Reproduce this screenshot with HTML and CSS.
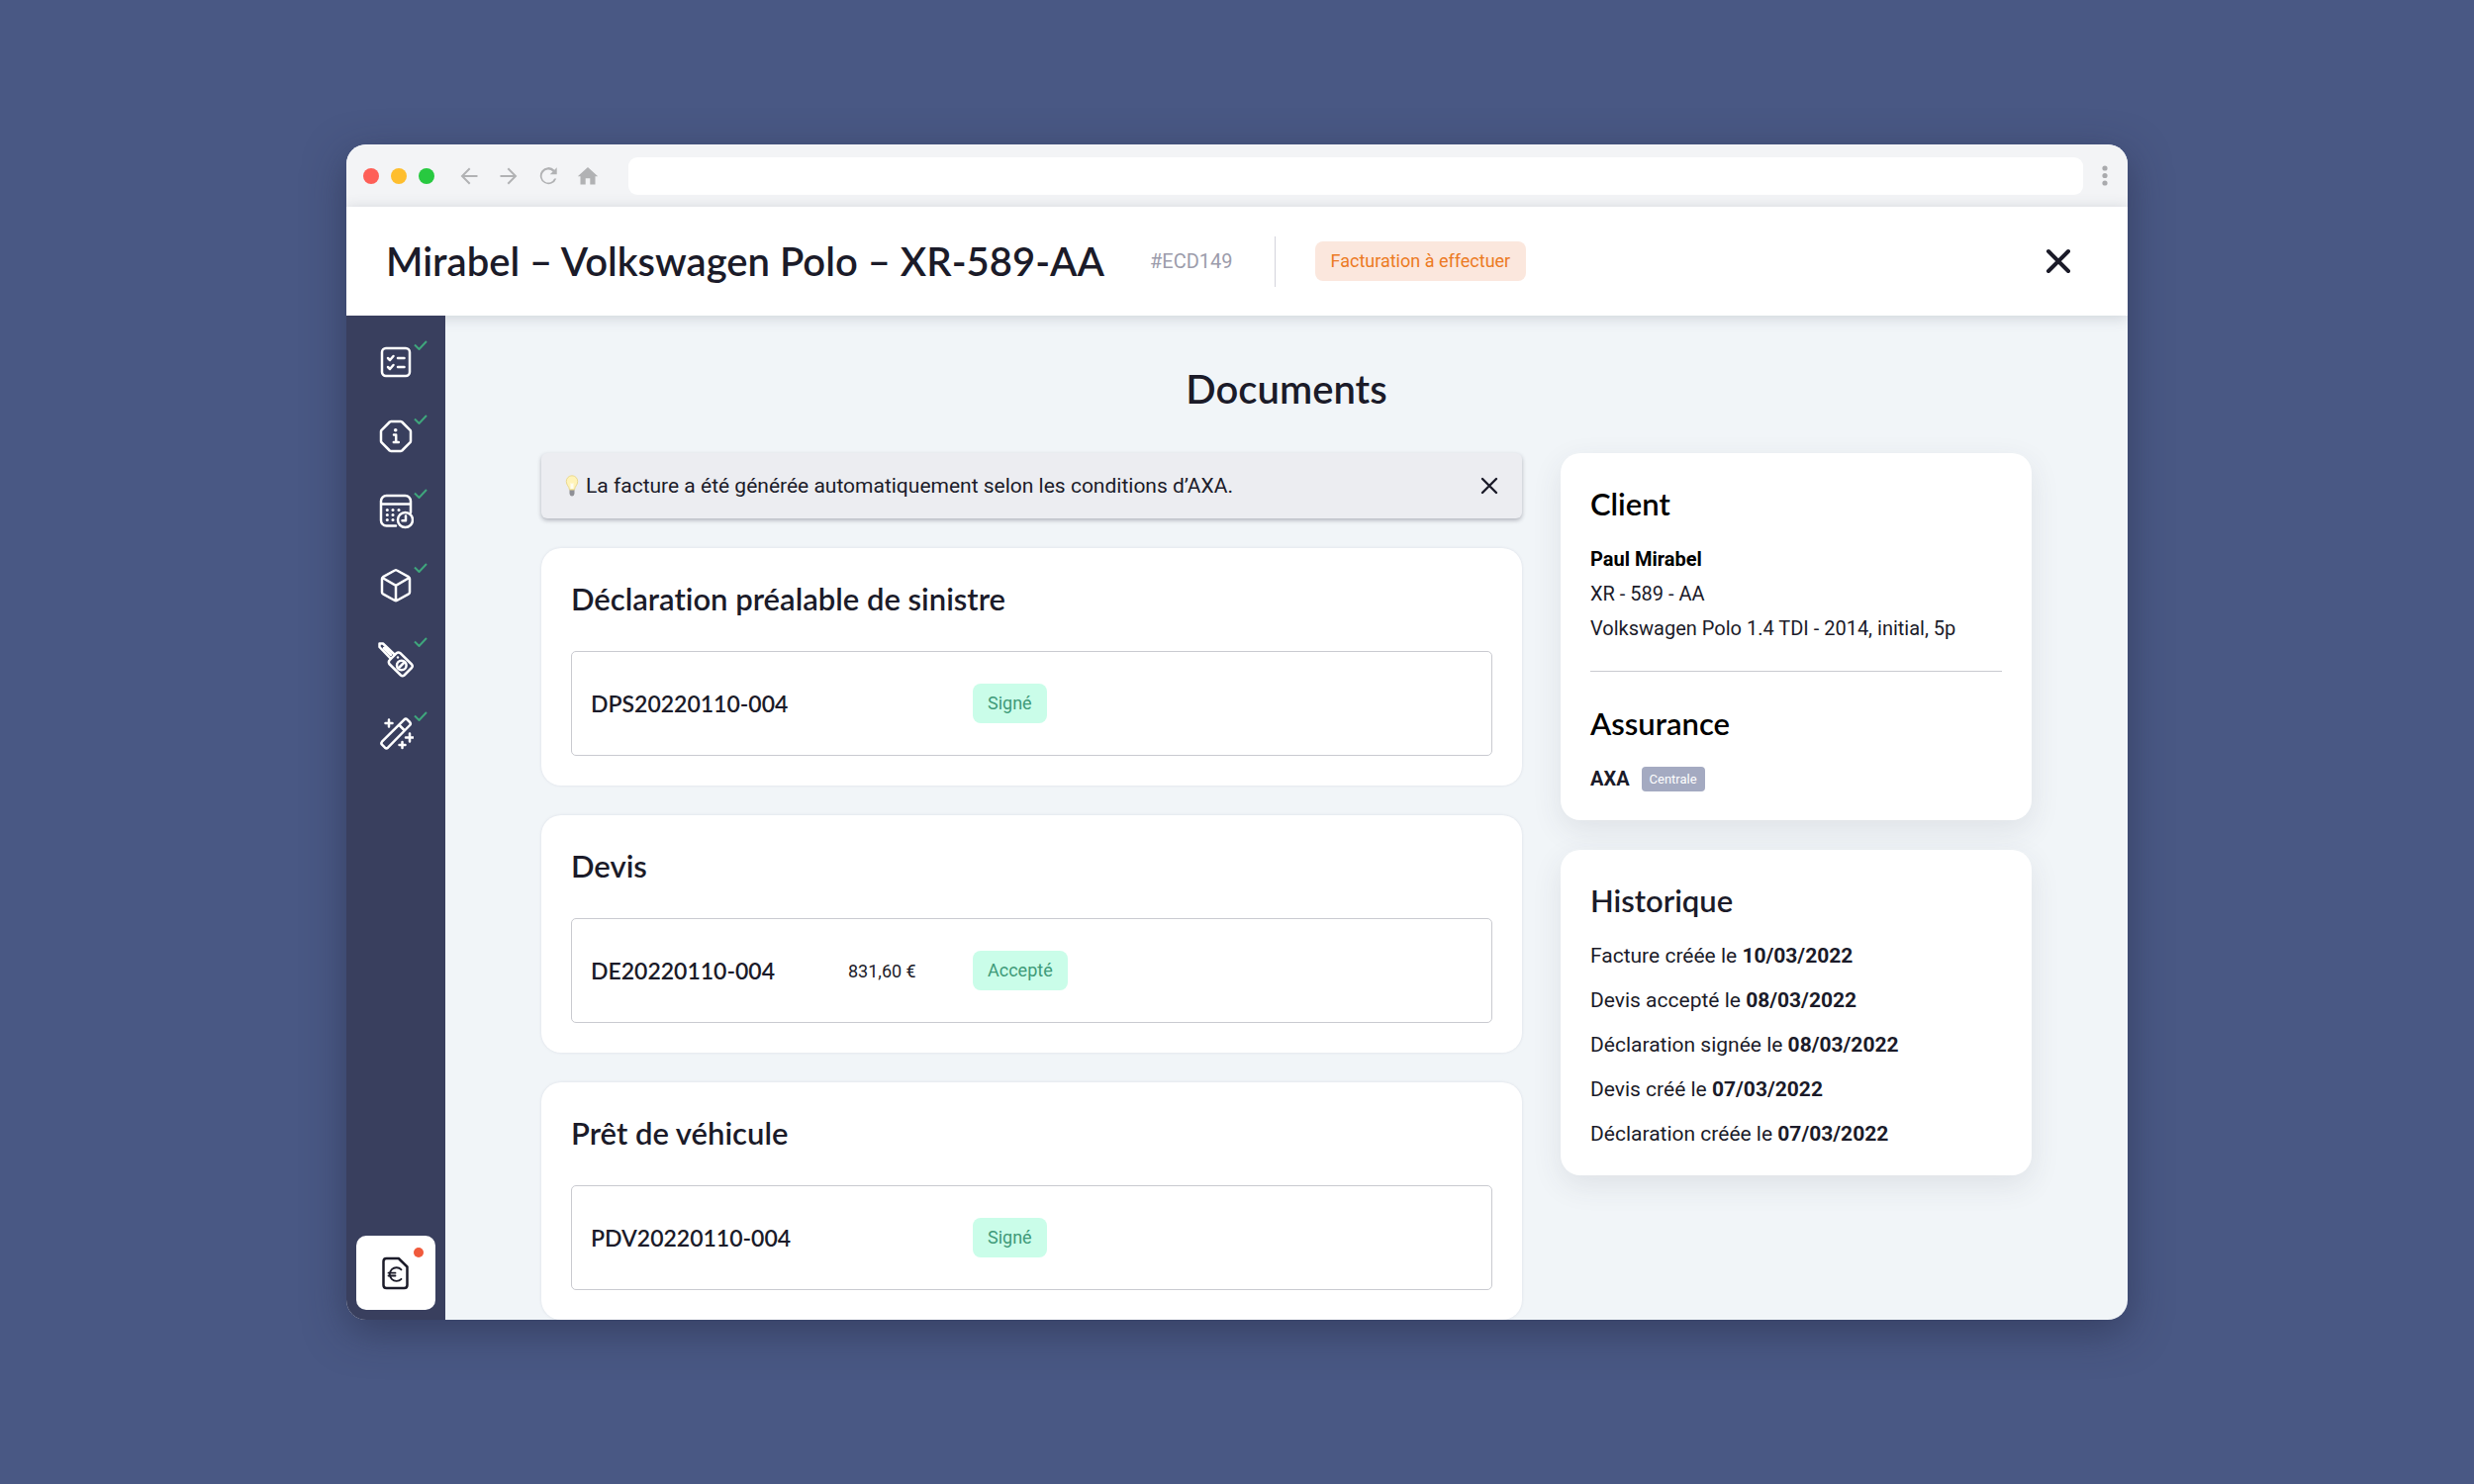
FILE: index.html
```html
<!DOCTYPE html>
<html lang="fr">
<head>
<meta charset="utf-8">
<meta name="viewport" content="width=device-width, initial-scale=1">
<title>Mirabel – Documents</title>
<link rel="stylesheet" href="styles.css">
</head>
<body>
<div class="window">
  <div class="chrome">
    <div class="lights"><span class="light red"></span><span class="light yellow"></span><span class="light green"></span></div>
    <div class="nav-buttons">
      <button class="icon-button" type="button" aria-label="Page précédente"><svg width="24" height="24" viewBox="0 0 24 24" fill="#b1b2b4"><path d="M20.5 11v2H7.400l6 6L12 20.400 3.600 12 12 3.600 13.400 5l-6 6z"/></svg></button>
      <button class="icon-button" type="button" aria-label="Page suivante"><svg width="24" height="24" viewBox="0 0 24 24" fill="#b1b2b4"><path d="M3.500 11v2h13.100l-6 6 1.400 1.400L20.400 12 12 3.600 10.600 5l6 6z"/></svg></button>
      <button class="icon-button" type="button" aria-label="Actualiser"><svg width="24" height="24" viewBox="0 0 24 24" fill="#b1b2b4"><path d="M18.350 5.650A8.500 8.500 0 1 0 20.300 14.500h-2.200A6.500 6.500 0 1 1 16.600 7.400L13.700 10.300H20.700V3.300z"/></svg></button>
      <button class="icon-button" type="button" aria-label="Accueil"><svg width="24" height="24" viewBox="0 0 24 24" fill="#b1b2b4"><path d="M9.700 20.500v-6.200h4.600v6.200h5.200V12.200h2.700L12 3 1.800 12.200h2.700v8.300z"/></svg></button>
    </div>
    <input class="address" type="text" aria-label="Adresse">
    <button class="icon-button menu" type="button" aria-label="Menu"><svg width="6" height="22" viewBox="0 0 6 22" fill="#a9aaad"><circle cx="3" cy="3" r="2.600"/><circle cx="3" cy="10.500" r="2.600"/><circle cx="3" cy="18" r="2.600"/></svg></button>
  </div>

  <header class="header">
    <h1 class="title">Mirabel – Volkswagen Polo – XR-589-AA</h1>
    <span class="reference">#ECD149</span>
    <span class="divider"></span>
    <span class="badge orange">Facturation à effectuer</span>
    <button class="icon-button close" type="button" aria-label="Fermer"><svg width="26" height="26" viewBox="0 0 26 26" fill="none" stroke="#1b1b29" stroke-width="4" stroke-linecap="round"><path d="M3 3l20 20M23 3L3 23"/></svg></button>
  </header>

  <div class="body">
    <nav class="sidebar" aria-label="Étapes">
      <a class="step" href="#taches" aria-label="Tâches">
        <svg class="icon" width="36" height="36" viewBox="0 0 36 36"><rect x="4" y="3" width="28" height="28" rx="4"/><path d="M10 13l2 2 3.500-4M10 22l2 2 3.500-4"/><path d="M20 13h6.500M20 22h6.500"/></svg>
        <svg class="check" width="14" height="10" viewBox="0 0 14 10"><path d="M1 4.500L5.500 9 13 1"/></svg>
      </a>
      <a class="step" href="#infos" aria-label="Informations">
        <svg class="icon" width="36" height="36" viewBox="0 0 36 36"><path d="M11.800 2.500Q12.500 2 13.200 2h9.600q.7 0 1.400.5l8.300 8.300q.5.600.5 1.400v9.600q0 .8-.5 1.400l-8.300 8.300q-.7.500-1.400.5h-9.600q-.7 0-1.400-.5L3.500 23.200Q3 22.600 3 21.800v-9.600q0-.8.500-1.400z"/><path d="M16 15.500h2.200v7M15.800 23h5"/><circle cx="17.700" cy="10.800" r="1.800" fill="#fff" stroke="none"/></svg>
        <svg class="check" width="14" height="10" viewBox="0 0 14 10"><path d="M1 4.500L5.500 9 13 1"/></svg>
      </a>
      <a class="step" href="#planning" aria-label="Planning">
        <svg class="icon" width="36" height="36" viewBox="0 0 36 36"><path d="M18 32.500H8.500a5.500 5.500 0 0 1-5.500-5.500V7.500A5.500 5.500 0 0 1 8.500 2h19A5.500 5.500 0 0 1 33 7.500V19M3 10.500h30"/><circle cx="27.500" cy="26.500" r="7.500"/><path d="M28 22.500v4.700h-3.500"/><g fill="#fff" stroke="none"><circle cx="9.300" cy="16.500" r="1.500"/><circle cx="15" cy="16.500" r="1.500"/><circle cx="21" cy="16.500" r="1.500"/><circle cx="9.300" cy="21.500" r="1.500"/><circle cx="15" cy="21.500" r="1.500"/><circle cx="9.300" cy="26.500" r="1.500"/><circle cx="15" cy="26.500" r="1.500"/></g></svg>
        <svg class="check" width="14" height="10" viewBox="0 0 14 10"><path d="M1 4.500L5.500 9 13 1"/></svg>
      </a>
      <a class="step" href="#pieces" aria-label="Pièces">
        <svg class="icon" width="36" height="36" viewBox="0 0 36 36"><path d="M17 2.500q1-.6 2 0l12 6.700q1 .6 1 1.800v13.500q0 1.200-1 1.800l-12 6.700q-1 .6-2 0l-12-6.700q-1-.6-1-1.800V11q0-1.200 1-1.800zM4.500 10L18 17.800 31.500 10M18 17.800V33"/></svg>
        <svg class="check" width="14" height="10" viewBox="0 0 14 10"><path d="M1 4.500L5.500 9 13 1"/></svg>
      </a>
      <a class="step" href="#vehicule" aria-label="Véhicule">
        <svg class="icon" width="36" height="36" viewBox="0 0 36 36" stroke-width="2"><path d="M12.500 16.500L1.500 5V1.500H5L16.500 12.500M6 6l7 7"/><path d="M18.500 11.300q2-1.500 4.200 0L34 22.500q1.500 1.700 0 3.500L26.500 33.500q-1.800 1.500-3.500 0L11.300 22q-1-1.800.2-3.500z"/><circle cx="23.800" cy="23.500" r="4.800"/><path d="M21.500 25.500l4.500-4.500"/><circle cx="20" cy="15.500" r="1.200" fill="#fff" stroke="none"/></svg>
        <svg class="check" width="14" height="10" viewBox="0 0 14 10"><path d="M1 4.500L5.500 9 13 1"/></svg>
      </a>
      <a class="step" href="#finitions" aria-label="Finitions">
        <svg class="icon" width="36" height="36" viewBox="0 0 36 36"><path d="M26.500 3.300q1.500-1.300 3 0l2.700 2.700q1.300 1.500 0 3L10 31.700q-1.500 1.300-3 0l-3-3q-1.300-1.500 0-3zM21.500 9l5 5"/><path d="M11 3.500v7M7.500 7h7M32 17.500v8M28 21.500h8M24.500 26v6M21.500 29h6"/></svg>
        <svg class="check" width="14" height="10" viewBox="0 0 14 10"><path d="M1 4.500L5.500 9 13 1"/></svg>
      </a>
      <a class="step active" href="#documents" aria-label="Documents" aria-current="page">
        <svg class="icon" width="36" height="36" viewBox="0 0 36 36"><path d="M8.500 3h12.300l8.700 8.500V30q0 3-3 3h-18q-3 0-3-3V6q0-3 3-3z"/><path d="M23.500 14.300a6.800 6.800 0 1 0 0 9.500M10.500 17.700h7M10.500 20.500h7" stroke-width="1.800"/></svg>
        <span class="dot"></span>
      </a>
    </nav>

    <main class="main">
      <h2 class="page-title">Documents</h2>
      <div class="columns">
        <div class="documents">
          <div class="alert" role="status">
            <svg width="14" height="22" viewBox="0 0 14 22"><path d="M4.500 14.500h5v4.500q-.5 2.500-2.500 2.500T4.500 19z" fill="#8f9096"/><path d="M7 .8a5.700 5.700 0 0 0-5.700 5.900c0 3.600 2.700 4.600 3.200 8.300h5c.5-3.700 3.200-4.700 3.200-8.300A5.700 5.700 0 0 0 7 .8z" fill="#fff3b8" stroke="#ead98f"/><path d="M5.500 8l1.500 1 1.500-1v6h-3z" fill="#fffdf0"/></svg>
            <p class="alert-text">La facture a été générée automatiquement selon les conditions d’AXA.</p>
            <button class="icon-button" type="button" aria-label="Masquer"><svg width="18" height="18" viewBox="0 0 18 18" fill="none" stroke="#1b1b29" stroke-width="2.400" stroke-linecap="round"><path d="M2 2l14 14M16 2L2 16"/></svg></button>
          </div>
          <section class="card">
            <h3 class="card-title">Déclaration préalable de sinistre</h3>
            <div class="record"><span class="number">DPS20220110-004</span><span class="amount"></span><span class="badge green">Signé</span></div>
          </section>
          <section class="card">
            <h3 class="card-title">Devis</h3>
            <div class="record"><span class="number">DE20220110-004</span><span class="amount">831,60 €</span><span class="badge green">Accepté</span></div>
          </section>
          <section class="card">
            <h3 class="card-title">Prêt de véhicule</h3>
            <div class="record"><span class="number">PDV20220110-004</span><span class="amount"></span><span class="badge green">Signé</span></div>
          </section>
        </div>
        <aside class="side">
          <section class="card raised">
            <h3 class="card-title black">Client</h3>
            <div class="lines">
              <p class="black"><strong>Paul Mirabel</strong></p>
              <p>XR - 589 - AA</p>
              <p>Volkswagen Polo 1.4 TDI - 2014, initial, 5p</p>
            </div>
            <hr class="rule">
            <h3 class="card-title black">Assurance</h3>
            <p class="insurer"><strong>AXA</strong><span class="tag">Centrale</span></p>
          </section>
          <section class="card raised">
            <h3 class="card-title">Historique</h3>
            <ul class="history">
              <li>Facture créée le <strong>10/03/2022</strong></li>
              <li>Devis accepté le <strong>08/03/2022</strong></li>
              <li>Déclaration signée le <strong>08/03/2022</strong></li>
              <li>Devis créé le <strong>07/03/2022</strong></li>
              <li>Déclaration créée le <strong>07/03/2022</strong></li>
            </ul>
          </section>
        </aside>
      </div>
    </main>
  </div>
</div>
</body>
</html>
```
FILE: styles.css
```css
* { box-sizing: border-box; }

body {
  margin: 0;
  min-height: 100vh;
  padding: 146px 14% 166px;
  display: flex;
  background: #495884;
  color: #1b1b29;
  font: 400 20px/35px Roboto, "Liberation Sans", sans-serif;
}

h1, h2, h3, p, ul { margin: 0; padding: 0; }
h1, h2, h3, .number {
  font-family: Lato, "Open Sans", sans-serif;
  font-weight: 600;
  font-variant-ligatures: none;
}
strong { font-weight: 700; }
svg { display: block; }

.window {
  flex: 1;
  min-width: 0;
  display: flex;
  flex-direction: column;
  border-radius: 20px;
  overflow: hidden;
  background: #f1f5f8;
  box-shadow: 0 12px 40px rgba(35, 40, 65, 0.5);
}

.icon-button {
  border: 0;
  padding: 0;
  background: none;
  color: inherit;
  cursor: pointer;
}

/* Browser bar */
.chrome {
  display: flex;
  align-items: center;
  height: 63px;
  padding: 0 20px 0 17px;
  background: #f3f4f6;
}
.lights { display: flex; gap: 12px; }
.light { width: 16px; height: 16px; border-radius: 50%; }
.red { background: #fe5f57; }
.yellow { background: #febe2e; }
.light.green { background: #28c940; }
.nav-buttons { display: flex; gap: 16px; margin: 0 29px 0 23px; }
.address {
  flex: 1;
  min-width: 0;
  height: 38px;
  padding: 0 16px;
  border: 0;
  border-radius: 9px;
  background: #fff;
  font: inherit;
}
.menu { margin-left: 19px; }

/* Case header */
.header {
  position: relative;
  display: flex;
  align-items: center;
  min-height: 110px;
  padding: 0 57px 0 40px;
  background: #fff;
  box-shadow: 0 2px 14px rgba(60, 70, 90, 0.2);
}
.title { font-size: 40px; line-height: 50px; }
.reference { margin-left: 46px; color: #9c9cab; }
.divider { width: 1px; height: 51px; margin: 0 40px 0 42px; background: #d3d3dc; }
.close { margin-left: auto; }

.badge {
  padding: 0 15px;
  border-radius: 8px;
  font-size: 18px;
  line-height: 40px;
}
.badge.orange { padding: 0 16px; background: #fbe7dd; color: #ec7a23; }
.badge.green { background: #cafde9; color: #3e9a78; }

.body { flex: 1; display: flex; }

/* Step navigation */
.sidebar {
  position: relative;
  width: 100px;
  padding: 10px;
  display: flex;
  flex-direction: column;
  background: #393f5e;
}
.step {
  position: relative;
  display: flex;
  align-items: center;
  justify-content: center;
  height: 75px;
}
.icon {
  fill: none;
  stroke: #fff;
  stroke-width: 2.5;
  stroke-linecap: round;
  stroke-linejoin: round;
}
.check {
  position: absolute;
  top: 15px;
  right: 8px;
  fill: none;
  stroke: #3fa67c;
  stroke-width: 2;
}
.step.active { margin-top: auto; border-radius: 10px; background: #fff; }
.step.active .icon { stroke: #1b1b29; }
.dot {
  position: absolute;
  top: 12px;
  right: 12px;
  width: 10px;
  height: 10px;
  border-radius: 50%;
  background: #f05a3c;
}

/* Content */
.main { flex: 1; min-width: 0; padding: 49px 97px 0; }
.page-title { font-size: 40px; line-height: 50px; text-align: center; }
.columns {
  display: grid;
  grid-template-columns: 991fr 476fr;
  align-items: start;
  gap: 39px;
  margin-top: 40px;
}
.documents, .side { display: flex; flex-direction: column; gap: 30px; }

.alert {
  display: flex;
  align-items: center;
  gap: 7px;
  min-height: 66px;
  padding: 0 24px;
  border-radius: 6px;
  background: #ecedf1;
  box-shadow: 0 2px 4px rgba(30, 30, 50, 0.3);
}
.alert-text { flex: 1; font-size: 21px; }

.card {
  padding: 30px;
  border-radius: 20px;
  background: #fff;
  box-shadow: 0 0 3px rgba(60, 60, 100, 0.12);
}
.card.raised {
  padding-bottom: 24px;
  box-shadow: 0 10px 30px rgba(60, 60, 80, 0.1);
}
.card-title { font-size: 31px; line-height: 42px; }
.black { color: #000; }

.record {
  display: grid;
  grid-template-columns: 260px 126px auto;
  align-items: center;
  justify-content: start;
  min-height: 106px;
  margin-top: 32px;
  padding: 0 19px;
  border: 1px solid #c9cad0;
  border-radius: 5px;
}
.number { font-size: 23px; }
.amount { font-size: 18px; }

.lines { margin-top: 18px; }
.rule { height: 1px; margin: 25px 0 31px; border: 0; background: #c9cad0; }
.insurer { display: flex; align-items: center; gap: 12px; margin-top: 18px; }
.tag {
  padding: 0 8px;
  border-radius: 4px;
  background: #a4aac1;
  color: #fff;
  font-size: 13px;
  line-height: 25px;
}
.history {
  display: grid;
  gap: 10px;
  margin-top: 18px;
  list-style: none;
  font-size: 21px;
}
```
